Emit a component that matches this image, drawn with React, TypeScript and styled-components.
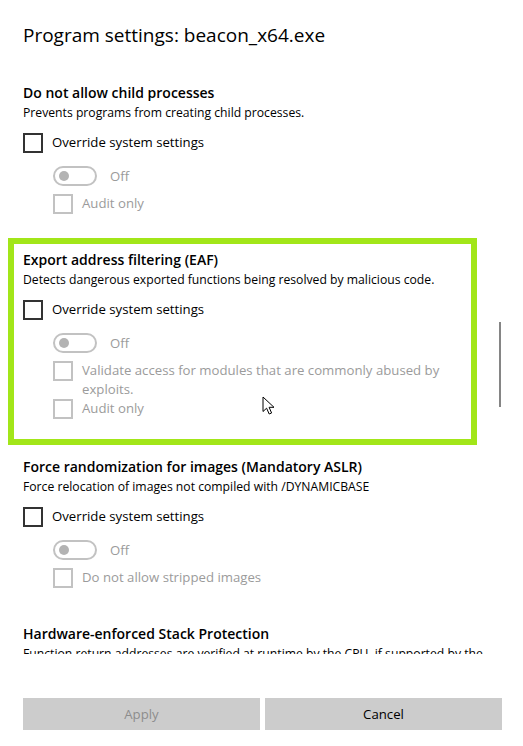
import React from "react";
import styled, { createGlobalStyle } from "styled-components";

const GlobalStyle = createGlobalStyle`
  html, body {
    margin: 0;
    padding: 0;
    background: #ffffff;
  }
  body {
    font-family: "Open Sans", "Noto Sans", "Liberation Sans", sans-serif;
    color: #000000;
  }
`;

interface Mitigation {
  title: string;
  description: string;
  options: string[];
  highlighted?: boolean;
}

const mitigations: Mitigation[] = [
  {
    title: "Do not allow child processes",
    description: "Prevents programs from creating child processes.",
    options: ["Audit only"],
  },
  {
    title: "Export address filtering (EAF)",
    description:
      "Detects dangerous exported functions being resolved by malicious code.",
    options: [
      "Validate access for modules that are commonly abused by exploits.",
      "Audit only",
    ],
    highlighted: true,
  },
  {
    title: "Force randomization for images (Mandatory ASLR)",
    description: "Force relocation of images not compiled with /DYNAMICBASE",
    options: ["Do not allow stripped images"],
  },
  {
    title: "Hardware-enforced Stack Protection",
    description:
      "Function return addresses are verified at runtime by the CPU, if supported by the hardware.",
    options: ["Audit only"],
  },
];

export default function App() {
  return (
    <>
      <GlobalStyle />
      <Window>
        <Title>Program settings: beacon_x64.exe</Title>
        <ScrollArea>
          <List>
            {mitigations.map((m) => (
              <Section key={m.title} $highlighted={m.highlighted}>
                <Heading>{m.title}</Heading>
                <Description>{m.description}</Description>
                <OverrideRow>
                  <CheckBox />
                  <CheckLabel>Override system settings</CheckLabel>
                </OverrideRow>
                <SubOptions>
                  <ToggleRow>
                    <Toggle>
                      <Knob />
                    </Toggle>
                    <ToggleLabel>Off</ToggleLabel>
                  </ToggleRow>
                  <DisabledList>
                    {m.options.map((o) => (
                      <CheckRow key={o}>
                        <CheckBox $disabled />
                        <CheckLabel $disabled>{o}</CheckLabel>
                      </CheckRow>
                    ))}
                  </DisabledList>
                </SubOptions>
              </Section>
            ))}
          </List>
          <ScrollThumb />
          <Cursor width="14" height="20" viewBox="0 0 14 20">
            <path
              d="M1 1 L1 15.5 L4.6 12.2 L7.2 18 L9.6 17 L7.1 11.3 L12 11.3 Z"
              fill="#ffffff"
              stroke="#000000"
              strokeWidth="1"
              strokeLinejoin="round"
            />
          </Cursor>
        </ScrollArea>
        <Footer>
          <Button disabled>Apply</Button>
          <Button>Cancel</Button>
        </Footer>
      </Window>
    </>
  );
}

const Window = styled.div`
  width: 523px;
  height: 746px;
  display: flex;
  flex-direction: column;
  background: #ffffff;
  overflow: hidden;
`;

const Title = styled.h1`
  margin: 20px 0 0 23px;
  font-size: 19px;
  font-weight: 400;
  line-height: 30px;
  color: #000000;
`;

const ScrollArea = styled.div`
  position: relative;
  height: 604px;
  overflow: hidden;
`;

const List = styled.div`
  display: flex;
  flex-direction: column;
  padding-top: 21px;
`;

const Section = styled.section<{ $highlighted?: boolean }>`
  width: 469px;
  box-sizing: border-box;
  margin-left: 8px;
  border: 6px solid ${(p) => (p.$highlighted ? "#a2e619" : "transparent")};
  padding: 6px 9px ${(p) => (p.$highlighted ? "20px" : "18px")} 9px;
  display: flex;
  flex-direction: column;
`;

const Heading = styled.div`
  font-size: 14px;
  font-weight: 600;
  line-height: 20px;
  color: #000000;
  white-space: nowrap;
`;

const Description = styled.div`
  width: 470px;
  font-size: 12.2px;
  line-height: 19px;
  color: #000000;
`;

const CheckRow = styled.div`
  display: flex;
  align-items: flex-start;
  gap: 9px;
`;

const OverrideRow = styled(CheckRow)`
  margin-top: 11px;
`;

const CheckBox = styled.span<{ $disabled?: boolean }>`
  flex: 0 0 auto;
  width: 20px;
  height: 20px;
  box-sizing: border-box;
  border: 2px solid ${(p) => (p.$disabled ? "#c2c2c2" : "#333333")};
  background: #ffffff;
`;

const CheckLabel = styled.span<{ $disabled?: boolean }>`
  font-size: 13.2px;
  line-height: 19px;
  color: ${(p) => (p.$disabled ? "#9b9b9b" : "#000000")};
  max-width: 390px;
`;

const SubOptions = styled.div`
  display: flex;
  flex-direction: column;
  padding-left: 30px;
  margin-top: 13px;
`;

const ToggleRow = styled.div`
  display: flex;
  align-items: center;
  gap: 13px;
  height: 20px;
`;

const Toggle = styled.span`
  width: 44px;
  height: 20px;
  box-sizing: border-box;
  border: 2px solid #c2c2c2;
  border-radius: 10px;
  display: flex;
  align-items: center;
  padding-left: 4px;
`;

const Knob = styled.span`
  width: 10px;
  height: 10px;
  border-radius: 50%;
  background: #b3b3b3;
`;

const ToggleLabel = styled.span`
  font-size: 13.2px;
  color: #9b9b9b;
`;

const DisabledList = styled.div`
  display: flex;
  flex-direction: column;
  margin-top: 8px;
`;

const ScrollThumb = styled.div`
  position: absolute;
  left: 499px;
  top: 272px;
  width: 2px;
  height: 85px;
  background: #858585;
`;

const Cursor = styled.svg`
  position: absolute;
  left: 262px;
  top: 346px;
`;

const Footer = styled.div`
  display: grid;
  grid-template-columns: 1fr 1fr;
  gap: 5px;
  padding: 0 21px 0 23px;
  margin-top: 44px;
`;

const Button = styled.button`
  height: 32px;
  border: none;
  background: #cccccc;
  font-family: "Open Sans", "Noto Sans", "Liberation Sans", sans-serif;
  font-size: 13.2px;
  color: #000000;
  padding: 0;
  cursor: pointer;

  &:disabled {
    color: #8c8c8c;
    cursor: default;
  }
`;
